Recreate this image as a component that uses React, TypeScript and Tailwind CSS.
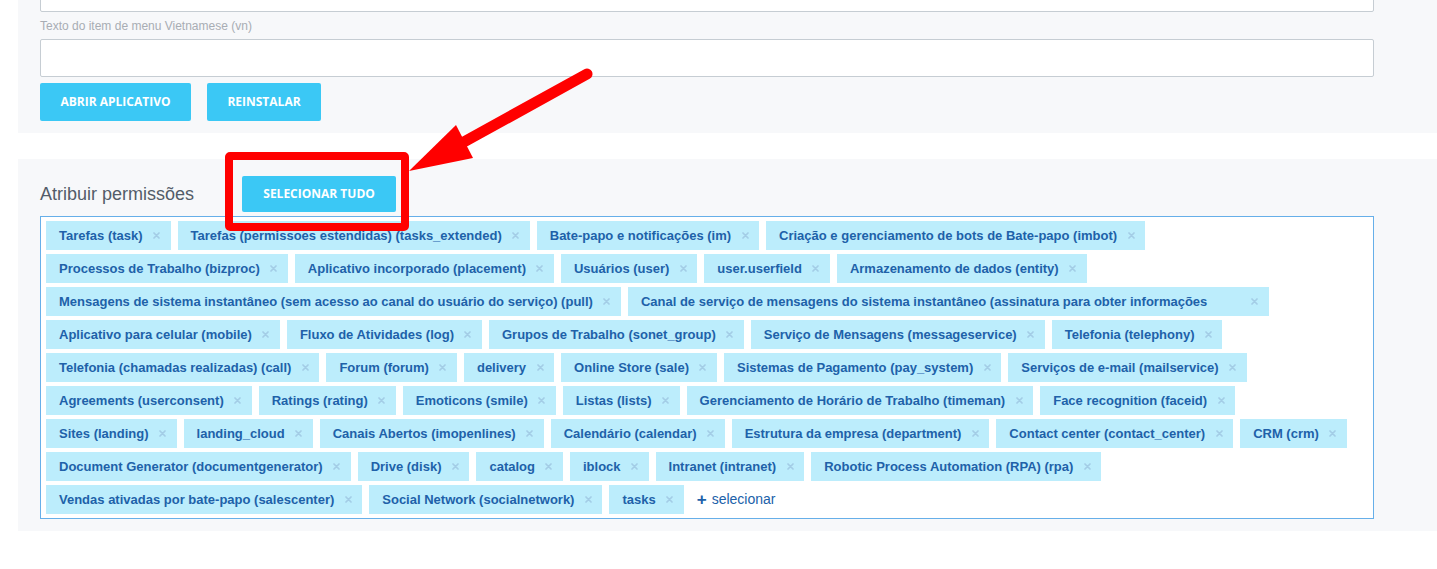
const rows: string[][] = [
  [
    "Tarefas (task)",
    "Tarefas (permissoes estendidas) (tasks_extended)",
    "Bate-papo e notificações (im)",
    "Criação e gerenciamento de bots de Bate-papo (imbot)",
  ],
  [
    "Processos de Trabalho (bizproc)",
    "Aplicativo incorporado (placement)",
    "Usuários (user)",
    "user.userfield",
    "Armazenamento de dados (entity)",
  ],
  [
    "Mensagens de sistema instantâneo (sem acesso ao canal do usuário do serviço) (pull)",
    "Canal de serviço de mensagens do sistema instantâneo (assinatura para obter informações",
  ],
  [
    "Aplicativo para celular (mobile)",
    "Fluxo de Atividades (log)",
    "Grupos de Trabalho (sonet_group)",
    "Serviço de Mensagens (messageservice)",
    "Telefonia (telephony)",
  ],
  [
    "Telefonia (chamadas realizadas) (call)",
    "Forum (forum)",
    "delivery",
    "Online Store (sale)",
    "Sistemas de Pagamento (pay_system)",
    "Serviços de e-mail (mailservice)",
  ],
  [
    "Agreements (userconsent)",
    "Ratings (rating)",
    "Emoticons (smile)",
    "Listas (lists)",
    "Gerenciamento de Horário de Trabalho (timeman)",
    "Face recognition (faceid)",
  ],
  [
    "Sites (landing)",
    "landing_cloud",
    "Canais Abertos (imopenlines)",
    "Calendário (calendar)",
    "Estrutura da empresa (department)",
    "Contact center (contact_center)",
    "CRM (crm)",
  ],
  [
    "Document Generator (documentgenerator)",
    "Drive (disk)",
    "catalog",
    "iblock",
    "Intranet (intranet)",
    "Robotic Process Automation (RPA) (rpa)",
  ],
  ["Vendas ativadas por bate-papo (salescenter)", "Social Network (socialnetwork)", "tasks"],
];

const Tag = ({ label }: { label: string }) => {
  const long = label.length > 80 && label.startsWith("Canal");
  return (
    <div className="flex h-[29px] shrink-0 items-center bg-[#bcedfc] pl-[13px] text-[13px] font-bold text-[#2061a9]">
      <span className={long ? "block w-[600px] whitespace-nowrap" : "whitespace-nowrap"}>{label}</span>
      <span className="flex w-[28px] items-center justify-center">
        <svg width="7" height="7" viewBox="0 0 7 7">
          <path d="M1 1L6 6M6 1L1 6" stroke="#a3cde6" strokeWidth="1.7" strokeLinecap="round" />
        </svg>
      </span>
    </div>
  );
};

const ActionButton = ({ children, width }: { children: string; width: string }) => (
  <button
    className={`flex h-[38px] items-center justify-center rounded-[2px] bg-[#3bc8f5] font-['Open_Sans',Arial,sans-serif] text-[12px] font-bold uppercase text-white ${width}`}
    type="button"
  >
    {children}
  </button>
);

export default function App() {
  return (
    <div className="relative h-[569px] w-[1437px] overflow-hidden bg-white font-['Liberation_Sans',Arial,sans-serif]">
      <section className="ml-[18px] bg-[#f7f8fa] pb-[12px] pl-[22px] pr-[63px]">
        <div className="-mt-[26px] h-[38px] rounded-[2px] border border-[#c6cdd3] bg-white" />
        <div className="pb-[6px] pt-[7px] text-[12px] leading-[14px] text-[#a8adb4]">Texto do item de menu Vietnamese (vn)</div>
        <div className="h-[38px] rounded-[2px] border border-[#c6cdd3] bg-white" />
        <div className="mt-[6px] flex gap-[16px]">
          <ActionButton width="w-[151px]">Abrir aplicativo</ActionButton>
          <ActionButton width="w-[114px]">Reinstalar</ActionButton>
        </div>
      </section>

      <section className="ml-[18px] mt-[26px] bg-[#f7f8fa] pb-[12px] pl-[22px] pr-[63px] pt-[17px]">
        <div className="flex items-center">
          <h2 className="text-[18px] leading-[22px] text-[#535c69]">Atribuir permissões</h2>
          <button
            className="ml-[48px] flex h-[36px] w-[154px] items-center justify-center rounded-[2px] bg-[#3bc8f5] font-['Open_Sans',Arial,sans-serif] text-[12px] font-bold uppercase text-white"
            type="button"
          >
            Selecionar tudo
          </button>
        </div>
        <div className="mt-[4px] flex flex-col gap-[4px] border border-[#66afe9] bg-white pb-[4px] pl-[5px] pt-[4px]">
          {rows.map((row, i) => (
            <div className="flex items-center gap-[7px]" key={i}>
              {row.map((label) => (
                <Tag key={label} label={label} />
              ))}
              {i === rows.length - 1 ? (
                <span className="ml-[6px] flex items-center gap-[5px] text-[14px] text-[#2061a9]">
                  <span className="text-[17px] font-bold leading-none">+</span>
                  selecionar
                </span>
              ) : null}
            </div>
          ))}
        </div>
      </section>

      <div className="pointer-events-none absolute left-[225px] top-[152px] h-[79px] w-[184px] rounded-[5px] border-[8px] border-[#ff0000]" />
      <svg className="pointer-events-none absolute left-0 top-0" width="1437" height="569" viewBox="0 0 1437 569">
        <line x1="587" y1="74" x2="462" y2="143" stroke="#ff0000" strokeWidth="11" strokeLinecap="round" />
        <polygon points="409,171 456,125 473,158" fill="#ff0000" />
      </svg>
    </div>
  );
}
